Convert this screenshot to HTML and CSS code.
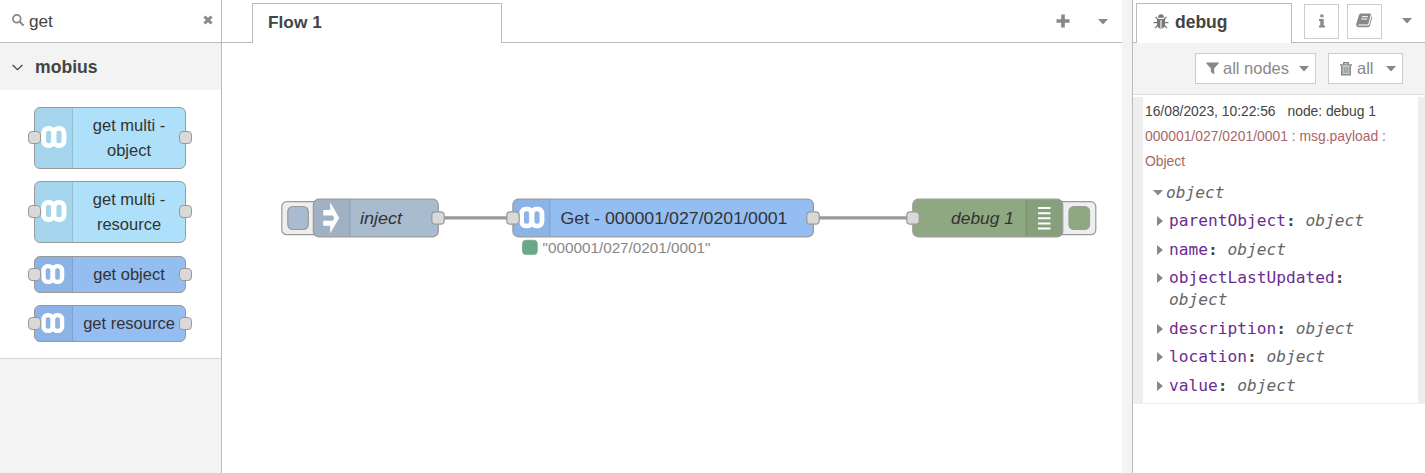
FILE: index.html
```html
<!DOCTYPE html>
<html lang="en">
<head>
<meta charset="utf-8">
<title>Flow editor</title>
<link rel="stylesheet" href="styles.css">
</head>
<body>
<svg class="defs" width="0" height="0">
  <symbol id="mobius" viewBox="0 0 26 22">
    <rect x="2.6" y="2.4" width="10" height="17.2" rx="4.6" fill="none" stroke="#fff" stroke-width="4.800"/>
    <rect x="13" y="2.4" width="10" height="17.2" rx="4.6" fill="none" stroke="#fff" stroke-width="4.800"/>
  </symbol>
  <symbol id="caret" viewBox="0 0 10 6"><path d="M0 0h10L5 5.6z" fill="currentColor"/></symbol>
</svg>
<div class="editor">
  <aside class="palette">
    <div class="search">
      <svg class="search-icon" width="12" height="12" viewBox="0 0 12 12"><circle cx="4.8" cy="4.8" r="3.9" fill="none" stroke="#888" stroke-width="1.7"/><path d="M7.8 7.8l3.3 3.3" stroke="#888" stroke-width="2" stroke-linecap="round"/></svg>
      <span class="query">get</span>
      <svg class="clear" width="10" height="10" viewBox="0 0 9 9"><path d="M1.3 1.3l6.4 6.4M7.7 1.3L1.3 7.7" stroke="#888" stroke-width="2.7"/></svg>
    </div>
    <div class="category">
      <svg width="11" height="7" viewBox="0 0 11 7"><path d="M.6 1l4.900 4.600L10.400 1" fill="none" stroke="#444" stroke-width="1.3"/></svg>
      <span class="category-name">mobius</span>
    </div>
    <div class="nodes">
      <div class="node tall"><span class="icon"><svg width="26" height="22"><use href="#mobius"/></svg></span><span class="label">get multi -<br>object</span><i class="port in"></i><i class="port out"></i></div>
      <div class="node tall"><span class="icon"><svg width="26" height="22"><use href="#mobius"/></svg></span><span class="label">get multi -<br>resource</span><i class="port in"></i><i class="port out"></i></div>
      <div class="node first-short"><span class="icon"><svg width="24" height="20"><use href="#mobius"/></svg></span><span class="label">get object</span><i class="port in"></i><i class="port out"></i></div>
      <div class="node"><span class="icon"><svg width="24" height="20"><use href="#mobius"/></svg></span><span class="label">get resource</span><i class="port in"></i><i class="port out"></i></div>
    </div>
  </aside>

  <main class="workspace">
    <div class="tabs">
      <div class="tab">Flow 1</div>
      <div class="tab-actions">
        <svg width="14" height="14" viewBox="0 0 14 14"><path d="M7 .5v13M.5 7h13" stroke="#888" stroke-width="3.6"/></svg>
        <svg class="caret" width="10" height="6"><use href="#caret"/></svg>
      </div>
    </div>
    <svg class="canvas" width="900" height="430" viewBox="222 43 900 430">
      <g stroke="#999" stroke-width="3.2"><path d="M438 217.8h75M813 217.8h100"/></g>
      <g stroke="#999" stroke-width="1.2">
        <rect x="281.8" y="201.7" width="42" height="33" rx="5" fill="#eee"/>
        <rect x="287.8" y="206.5" width="20.5" height="23" rx="5" fill="#a9bbcf"/>
        <rect x="313.3" y="199.2" width="125" height="37.6" rx="5.5" fill="#a9bbcf"/>
        <rect x="512.9" y="199.2" width="300.5" height="37.6" rx="5.5" fill="#94bdf2"/>
        <rect x="1053" y="201.7" width="42.8" height="33" rx="5" fill="#eee"/>
        <rect x="1069" y="206.5" width="20.5" height="23" rx="5" fill="#8ea982"/>
        <rect x="912.8" y="199.2" width="150" height="37.6" rx="5.5" fill="#8ea982"/>
      </g>
      <g fill="#000" fill-opacity=".05">
        <path d="M350 199.8v36.4H319q-5 0-5-5v-26.4q0-5 5-5z"/>
        <path d="M550 199.8v36.4H518.5q-5 0-5-5v-26.4q0-5 5-5z"/>
        <path d="M1026 199.8v36.4h31q5 0 5-5v-26.4q0-5-5-5z"/>
      </g>
      <path d="M350 199.8v36.4M550 199.8v36.4M1026 199.8v36.4" stroke="#000" stroke-opacity=".12"/>
      <path d="M323.2 210h7v-7.800L339.2 218l-9 15.3v-7.600h-7v-5h9.600l1.400-2.700-1.400-2.600h-9.600z" fill="#fff"/>
      <use href="#mobius" x="519" y="206.5" width="26" height="22"/>
      <path d="M1038 208h12.5M1038 213.2h12.5M1038 218.3h12.5M1038 223.4h12.5M1038 228.6h12.5" stroke="#fff" stroke-width="2"/>
      <g fill="#d9d9d9" stroke="#999" stroke-width="1.2">
        <rect x="431.8" y="211.8" width="12.4" height="12.4" rx="3.5"/>
        <rect x="506.8" y="211.8" width="12.4" height="12.4" rx="3.5"/>
        <rect x="806.8" y="211.8" width="12.4" height="12.4" rx="3.5"/>
        <rect x="906.8" y="211.8" width="12.4" height="12.4" rx="3.5"/>
      </g>
      <g class="node-text">
        <text class="it" x="360" y="223.5" textLength="42" lengthAdjust="spacingAndGlyphs">inject</text>
        <text x="560.500" y="223.5" textLength="227" lengthAdjust="spacingAndGlyphs">Get - 000001/027/0201/0001</text>
        <text class="it" x="951" y="223.5" textLength="63" lengthAdjust="spacingAndGlyphs">debug 1</text>
      </g>
      <rect x="522.5" y="240.2" width="14.8" height="14.4" rx="3.5" fill="#6ba886" stroke="#5fa07b" stroke-width=".6"/>
      <text class="status" x="542.5" y="253" textLength="168" lengthAdjust="spacingAndGlyphs">"000001/027/0201/0001"</text>
    </svg>
  </main>
  <div class="separator"></div>

  <aside class="sidebar">
    <div class="side-tabs">
      <div class="side-tab">
        <svg width="16" height="16" viewBox="0 0 16 16"><path d="M5 3.800a3 3.600 0 0 1 6 0z" fill="#777"/><path d="M4 5h8v5.5q-.3 4-4 4t-4-4z" fill="#777"/><path d="M2.500 2.800l2.500 2.700M13.500 2.800L11 5.500M.5 8.700h4M11.5 8.700h4M2 14.200l3-3.200M14 14.200l-3-3.200" stroke="#777" stroke-width="1.2"/><path d="M8 6v8" stroke="#fff" stroke-width="1.1"/></svg>
        <span>debug</span>
      </div>
      <div class="side-button"><svg width="8" height="14" viewBox="0 0 8 13"><path d="M2.3 0h3.200v2.8H2.300zM1 4.5h4.7V11H7v2H1v-2h1.3V6.4H1z" fill="#888"/></svg></div>
      <div class="side-button"><svg width="17" height="15" viewBox="0 0 17 14"><path d="M5 0h9q1.2 0 .9 1.1L12.4 10q-.3 1-1.4 1H2.7q-1 .3-.3 1.1h9.4q1 0 1.4-1.1l2.6-8.3q.7.4.5 1.2l-2.4 8.2q-.4 1.7-2 1.7H2.4Q-.2 13.4.2 10.5L3 1.6Q3.4 0 5 0z" fill="#888"/><path d="M5.900 3.200h6M5.200 5.500h6" stroke="#fff"/></svg></div>
      <svg class="caret side-caret" width="10" height="6"><use href="#caret"/></svg>
    </div>
    <div class="toolbar">
      <div class="filter nodes-filter"><svg width="13" height="13" viewBox="0 0 13 13"><path d="M.3.500h12.400v1L8.200 6.300v6.200L4.800 10V6.300L.3 1.500z" fill="#888"/></svg><span>all nodes</span><svg class="caret" width="10" height="6"><use href="#caret"/></svg></div>
      <div class="filter"><svg width="12" height="14" viewBox="0 0 12 14"><path d="M3.7 2.5V.8h4.600v1.700M0 3h12" fill="none" stroke="#888" stroke-width="1.4"/><path d="M1.800 3.500v9.200h8.400V3.500" fill="#ccc" stroke="#888" stroke-width="1.500"/><path d="M4.200 5v6M6 5v6M7.800 5v6" fill="none" stroke="#888" stroke-width=".9"/></svg><span>all</span><svg class="caret" width="10" height="6"><use href="#caret"/></svg></div>
    </div>
    <div class="message">
      <div class="meta"><span class="date">16/08/2023, 10:22:56</span><span class="source">node: debug 1</span></div>
      <div class="topic"><span>000001/027/0201/0001 : msg.payload :</span><br>Object</div>
      <div class="tree">
        <div class="row root"><svg class="open" width="10" height="6"><use href="#caret"/></svg><i>object</i></div>
        <div class="row"><b class="arrow"></b><div><span class="key">parentObject</span><b>:</b> <i>object</i></div></div>
        <div class="row"><b class="arrow"></b><div><span class="key">name</span><b>:</b> <i>object</i></div></div>
        <div class="row"><b class="arrow"></b><div><span class="key">objectLastUpdated</span><b>:</b><br><i>object</i></div></div>
        <div class="row"><b class="arrow"></b><div><span class="key">description</span><b>:</b> <i>object</i></div></div>
        <div class="row"><b class="arrow"></b><div><span class="key">location</span><b>:</b> <i>object</i></div></div>
        <div class="row"><b class="arrow"></b><div><span class="key">value</span><b>:</b> <i>object</i></div></div>
      </div>
    </div>
  </aside>
</div>
</body>
</html>
```
FILE: styles.css
```css
* { box-sizing: border-box; }
body { margin: 0; overflow: hidden; background: #fff; color: #444; font: 16.5px "Liberation Sans", Arial, sans-serif; }
svg { display: block; flex: none; }
.defs { position: absolute; }
.editor { display: flex; height: 473px; }

.palette { width: 222px; background: #f3f3f3; border-right: 1px solid #bbb; }
.search { display: flex; height: 43px; padding: 0 8px 0 12px; background: #fff; border-bottom: 1px solid #bbb; align-items: center; }
.search-icon { margin-bottom: 3px; }
.query { flex: 1; margin: 1px 0 0 5px; font-size: 17.2px; }
.clear { margin-bottom: 3px; }
.category { display: flex; height: 47px; padding: 1px 0 0 12px; align-items: center; gap: 12px; font-weight: bold; }
.category-name { font-size: 17.6px; }
.nodes { display: flex; flex-direction: column; gap: 12px; height: 269px; padding: 17px 0 0 34px; background: #fff; border-bottom: 1px solid #d5d5d5; }
.node { position: relative; display: flex; width: 152px; height: 37px; border: 1px solid #999; border-radius: 6px; background: #94bdf2; color: #333; }
.node.tall { height: 62px; background: #aee1f9; }
.first-short { margin-top: 1px; }
.icon { display: flex; width: 38px; padding: 0 0 2px 6px; align-items: center; background: rgba(0, 0, 0, .05); border-right: 1px solid rgba(0, 0, 0, .1); border-radius: 5px 0 0 5px; }
.label { flex: 1; align-self: center; line-height: 25px; text-align: center; white-space: nowrap; }
.port { position: absolute; top: 50%; width: 13px; height: 13px; margin-top: -7px; border: 1px solid #999; border-radius: 4px; background: #d9d9d9; }
.port.in { left: -7px; }
.port.out { right: -7px; }

.workspace { width: 900px; }
.tabs { display: flex; height: 43px; padding: 3px 14px 0 30px; justify-content: space-between; border-bottom: 1px solid #bbb; }
.tab { width: 250px; height: 40px; padding: 0 15px; border: 1px solid #bbb; border-bottom: 0; background: #fff; font-weight: bold; font-size: 17.3px; line-height: 37px; }
.tab-actions { display: flex; align-items: center; gap: 28px; height: 36px; }
.tab-actions .caret { margin-top: 2px; }
.caret { color: #888; }
.node-text { fill: #333; font-size: 17.2px; }
.it { font-style: italic; }
.status { fill: #888; font-size: 15.2px; }
.separator { width: 11px; background: #f3f3f3; border-right: 1px solid #bbb; }

.sidebar { flex: 1; }
.side-tabs { display: flex; height: 43px; padding: 3px 0 0 3px; border-bottom: 1px solid #bbb; }
.side-tab { display: flex; width: 156px; height: 40px; padding: 0 0 3px 16px; border: 1px solid #bbb; border-bottom: 0; background: #fff; gap: 6px; align-items: center; font-size: 17.5px; font-weight: bold; }
.side-button { display: flex; width: 35px; height: 35px; margin: 1px 0 0 12px; padding-bottom: 2px; border: 1px solid #ccc; align-items: center; justify-content: center; }
.side-button + .side-button { margin-left: 8px; }
.side-caret { margin: 15px 0 0 20px; }
.toolbar { display: flex; height: 52px; padding: 10px 22px 0 0; background: #f3f3f3; border-bottom: 1px solid #ddd; justify-content: flex-end; gap: 12px; color: #888; }
.filter { display: flex; width: 75px; height: 31px; padding: 0 6px 0 11px; background: #fff; border: 1px solid #ccc; align-items: center; white-space: nowrap; }
.filter span { flex: 1; margin-left: 5px; }
.nodes-filter { width: 121px; padding-left: 10px; }
.nodes-filter span { margin-left: 4px; }
.message { height: 307px; margin-top: 2px; padding: 2px 0 0 2px; border: 0 solid #eee; border-width: 0 7px 1px 10px; background: #fff; }
.meta, .topic { height: 25px; line-height: 25px; font-size: 13.9px; white-space: nowrap; }
.meta { letter-spacing: -.04px; }
.source { margin-left: 12px; }
.topic { height: 50px; color: #a66; }
.tree { padding: 4.4px 0 0 8px; font: 16.2px/22px "DejaVu Sans Mono", monospace; }
.row { display: flex; padding: 3.25px 0; margin-left: 5px; white-space: pre; }
.root { margin-left: 0; gap: 3px; }
.tree i { color: #666; }
.tree .key { color: #6b2c91; }
.open { margin-top: 8px; color: #888; }
.arrow { width: 0; height: 0; margin: 6px 6px 0 -1px; border: 5px solid transparent; border-left: 6px solid #888; border-right: 0; }
```
